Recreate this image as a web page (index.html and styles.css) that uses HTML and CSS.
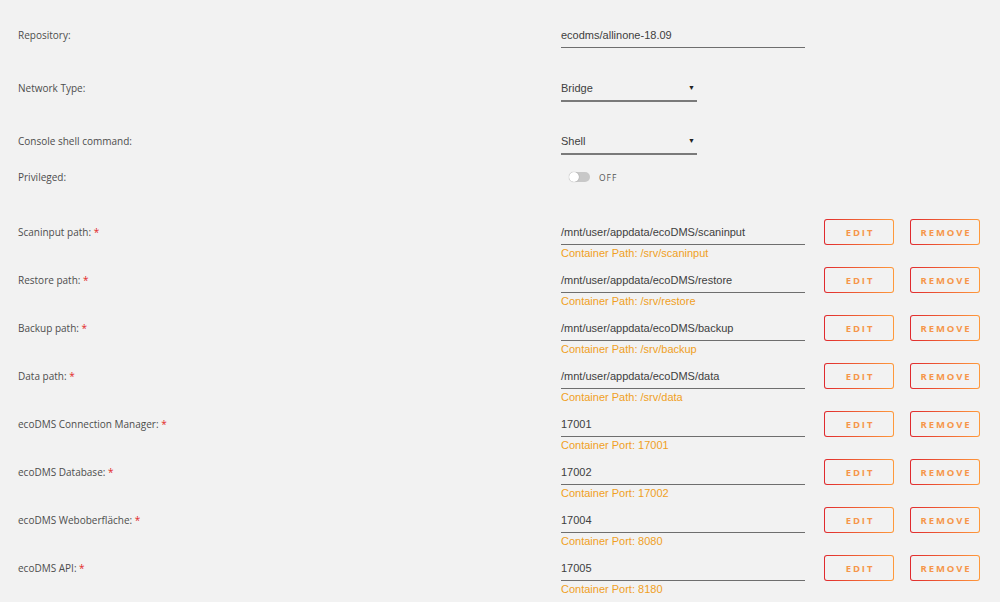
FILE: index.html
```html
<!DOCTYPE html>
<html>
<head>
<meta charset="utf-8">
<link rel="stylesheet" href="styles.css">
</head>
<body>
<div class="form">
  <div class="row row-repo">
    <div class="label">Repository:</div>
    <div class="field"><div class="input wide">ecodms/allinone-18.09</div></div>
  </div>
  <div class="row row-net">
    <div class="label">Network Type:</div>
    <div class="field"><div class="input select">Bridge<span class="caret">&#9660;</span></div></div>
  </div>
  <div class="row row-console">
    <div class="label">Console shell command:</div>
    <div class="field"><div class="input select">Shell<span class="caret">&#9660;</span></div></div>
  </div>
  <div class="row row-priv">
    <div class="label">Privileged:</div>
    <div class="field toggle-field"><span class="toggle"><span class="knob"></span></span><span class="off">OFF</span></div>
  </div>

  <div class="row path-row">
    <div class="label">Scaninput path: <span class="req">*</span></div>
    <div class="field"><div class="input wide">/mnt/user/appdata/ecoDMS/scaninput</div><div class="hint">Container Path: /srv/scaninput</div></div>
    <div class="actions"><button class="btn">EDIT</button><button class="btn">REMOVE</button></div>
  </div>
  <div class="row path-row">
    <div class="label">Restore path: <span class="req">*</span></div>
    <div class="field"><div class="input wide">/mnt/user/appdata/ecoDMS/restore</div><div class="hint">Container Path: /srv/restore</div></div>
    <div class="actions"><button class="btn">EDIT</button><button class="btn">REMOVE</button></div>
  </div>
  <div class="row path-row">
    <div class="label">Backup path: <span class="req">*</span></div>
    <div class="field"><div class="input wide">/mnt/user/appdata/ecoDMS/backup</div><div class="hint">Container Path: /srv/backup</div></div>
    <div class="actions"><button class="btn">EDIT</button><button class="btn">REMOVE</button></div>
  </div>
  <div class="row path-row">
    <div class="label">Data path: <span class="req">*</span></div>
    <div class="field"><div class="input wide">/mnt/user/appdata/ecoDMS/data</div><div class="hint">Container Path: /srv/data</div></div>
    <div class="actions"><button class="btn">EDIT</button><button class="btn">REMOVE</button></div>
  </div>
  <div class="row path-row">
    <div class="label">ecoDMS Connection Manager: <span class="req">*</span></div>
    <div class="field"><div class="input wide">17001</div><div class="hint">Container Port: 17001</div></div>
    <div class="actions"><button class="btn">EDIT</button><button class="btn">REMOVE</button></div>
  </div>
  <div class="row path-row">
    <div class="label">ecoDMS Database: <span class="req">*</span></div>
    <div class="field"><div class="input wide">17002</div><div class="hint">Container Port: 17002</div></div>
    <div class="actions"><button class="btn">EDIT</button><button class="btn">REMOVE</button></div>
  </div>
  <div class="row path-row">
    <div class="label">ecoDMS Weboberfläche: <span class="req">*</span></div>
    <div class="field"><div class="input wide">17004</div><div class="hint">Container Port: 8080</div></div>
    <div class="actions"><button class="btn">EDIT</button><button class="btn">REMOVE</button></div>
  </div>
  <div class="row path-row">
    <div class="label">ecoDMS API: <span class="req">*</span></div>
    <div class="field"><div class="input wide">17005</div><div class="hint">Container Port: 8180</div></div>
    <div class="actions"><button class="btn">EDIT</button><button class="btn">REMOVE</button></div>
  </div>
</div>
</body>
</html>
```

FILE: styles.css
```css
html, body {
  margin: 0;
  padding: 0;
  background: #f2f2f2;
}
body {
  font-family: "Open Sans", "Liberation Sans", sans-serif;
  font-size: 10px;
  color: #4a4a4a;
  overflow: hidden;
}
.form {
  padding: 23px 0 0 18px;
  display: flex;
  flex-direction: column;
}
.row {
  display: flex;
  align-items: flex-start;
}
.row-repo { margin-bottom: 28px; }
.row-net { margin-bottom: 27px; }
.row-console { margin-bottom: 10px; }
.row-priv { margin-bottom: 31px; height: 24px; }
.path-row { height: 48px; }
.label {
  width: 543px;
  flex: none;
  line-height: 24px;
  color: #4d4d4d;
}
.req { color: #e22828; }
.field {
  width: 244px;
  flex: none;
  display: flex;
  flex-direction: column;
}
.input {
  font-family: "Liberation Sans", Arial, sans-serif;
  font-size: 11px;
  line-height: 24px;
  border-bottom: 1px solid #6e6e6e;
  color: #404040;
  box-sizing: border-box;
  white-space: nowrap;
}
.input.wide { width: 244px; }
.input.select {
  width: 136px;
  display: flex;
  justify-content: space-between;
  border-bottom: 2px solid #7a7a7a;
}
.caret {
  font-size: 7px;
  color: #222;
  padding-right: 2px;
}
.hint {
  font-family: "Liberation Sans", Arial, sans-serif;
  font-size: 11px;
  color: #f0a01e;
  line-height: 14px;
  margin-top: 1px;
  white-space: nowrap;
}
.toggle-field {
  flex-direction: row;
  align-items: center;
  height: 24px;
  padding-left: 8px;
  box-sizing: border-box;
}
.toggle {
  width: 21px;
  height: 10px;
  border-radius: 5px;
  background: #c8c8c8;
  position: relative;
  display: inline-block;
}
.knob {
  position: absolute;
  left: 0;
  top: 0;
  width: 10px;
  height: 10px;
  border-radius: 50%;
  background: #fff;
  box-shadow: 0 0 1px rgba(0,0,0,0.4);
}
.off {
  margin-left: 9px;
  font-size: 8.5px;
  letter-spacing: 1px;
  color: #555;
}
.actions {
  display: flex;
  gap: 16px;
  margin-left: 19px;
  margin-top: -1px;
}
.btn {
  width: 70px;
  height: 26px;
  padding: 0;
  border: 1.5px solid transparent;
  border-radius: 3px;
  background: linear-gradient(#f2f2f2, #f2f2f2) padding-box,
              linear-gradient(90deg, #e02a2e, #ff9a3c) border-box;
  font-family: "Open Sans", "Liberation Sans", sans-serif;
  font-size: 9.5px;
  font-weight: 700;
  letter-spacing: 1.9px;
  color: #f6964a;
  box-sizing: border-box;
  text-indent: 2px;
}
```
